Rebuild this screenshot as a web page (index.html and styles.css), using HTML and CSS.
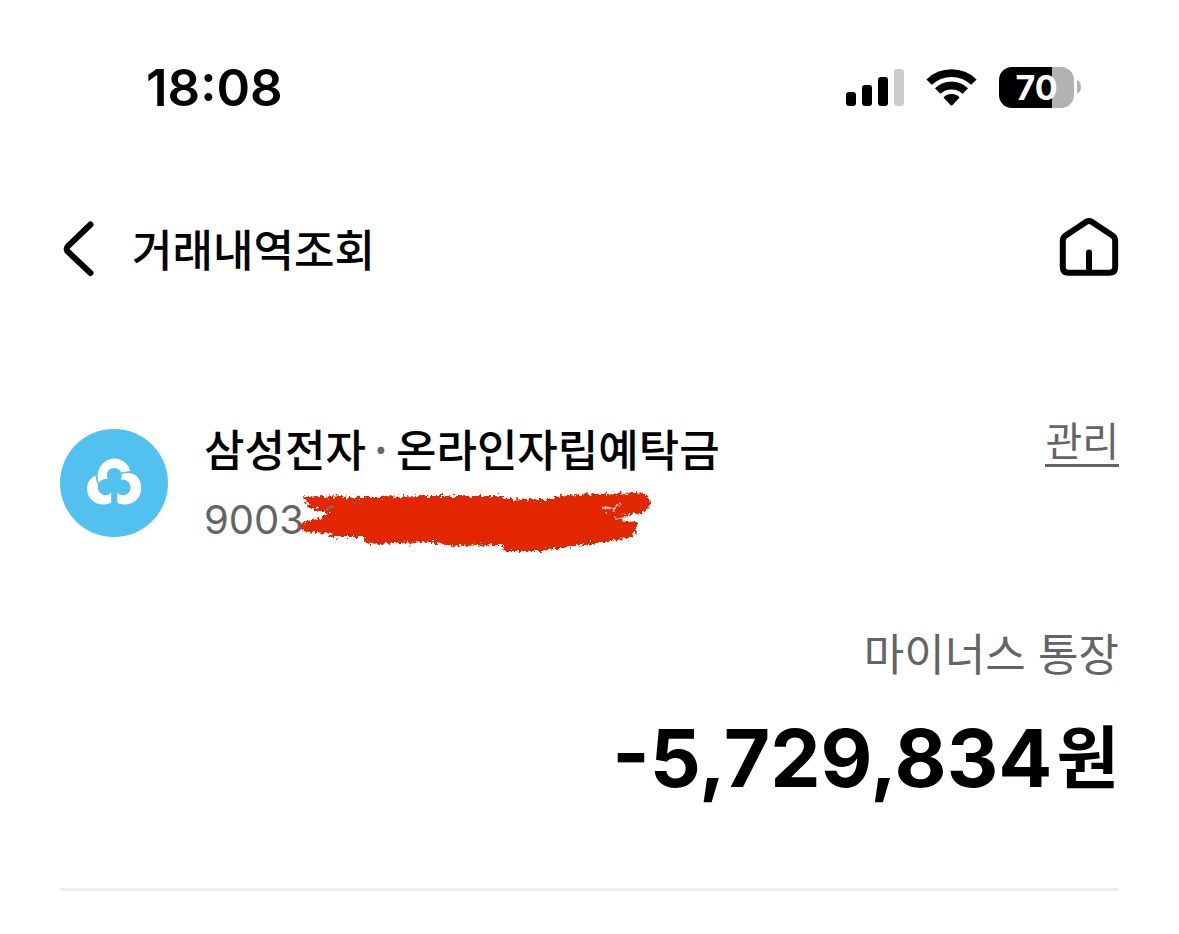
FILE: index.html
```html
<!DOCTYPE html>
<html lang="ko">
<head>
<meta charset="utf-8">
<meta name="viewport" content="width=device-width, initial-scale=1">
<title>거래내역조회</title>
<link rel="stylesheet" href="styles.css">
</head>
<body>
<div class="status-bar">
  <time class="clock">18:08</time>
  <div class="indicators">
    <svg class="signal" width="58" height="37" viewBox="0 0 58 37" aria-hidden="true">
      <rect x="0" y="23" width="10" height="14" rx="3"/>
      <rect x="16" y="16" width="10" height="21" rx="3"/>
      <rect x="32" y="8" width="10" height="29" rx="3"/>
      <rect x="48" y="0" width="10" height="37" rx="3" fill="#cccccc"/>
    </svg>
    <svg class="wifi" width="51" height="37" viewBox="0 0 51 37" aria-hidden="true">
      <path d="M0.4 10.4A36 36 0 0 1 50.6 10.4L45.2 15.8A28.6 28.6 0 0 0 5.8 15.8Z"/>
      <path d="M9 19.2A23.5 23.5 0 0 1 42 19.2L36.7 24.8A16.6 16.6 0 0 0 14.3 24.8Z"/>
      <path d="M17.5 28.4A11.3 11.3 0 0 1 33.5 28.4L26.6 35.9Q25.5 37 24.4 35.9Z"/>
    </svg>
    <div class="battery"><span class="battery-level">70</span><svg class="battery-cap" width="4" height="14" viewBox="0 0 4 14" aria-hidden="true"><path d="M0 0Q4 2 4 7T0 14Z" fill="#b2b2b2"/></svg></div>
  </div>
</div>
<header class="header">
  <button class="icon-button" type="button" aria-label="뒤로">
    <svg width="36" height="60" viewBox="0 0 36 60"><path d="M30.5 6.5L8 28.2Q5.2 31 8 33.8L30.5 55" class="line"/></svg>
  </button>
  <h1 class="title">거래내역조회</h1>
  <button class="icon-button home" type="button" aria-label="홈">
    <svg width="60" height="60" viewBox="0 0 60 60"><path d="M27 3.9Q30 2.1 33 3.9L53 17.2Q56.2 19.2 56.2 22.7V49Q56.2 54.8 50.4 54.8H9.6Q3.8 54.8 3.8 49V22.7Q3.8 19.2 7 17.2ZM30 54V34.5" class="line"/></svg>
  </button>
</header>
<main class="content">
  <section class="account">
    <svg class="logo" width="108" height="108" viewBox="0 0 108 108" aria-hidden="true">
      <circle cx="54" cy="54" r="54" fill="#53c1f0"/>
      <g fill="#fff">
        <path d="M37.5 46.6C38.5 36 46 29.4 54 29.4C62 29.4 68.5 34.5 70.3 42.1L61 43.5C59.8 40.6 57.2 39 54 39C49.8 39 46.8 42.3 47 46.2C47 48 47.5 49 47.5 50.2C44.5 49.3 41 50.5 38.8 53.8Q37.4 50.5 37.5 46.6Z"/>
        <path d="M35.5 46.6C30.5 48.8 27 53.5 27 59.6C27 68.5 34 75.5 42.5 75.5C46 75.5 49.2 74.8 51.2 73.4V63.7C48.5 66.8 43.8 67 40.5 64.3C37.8 62.1 37.2 58.4 38.3 55.8Q35.8 52 35.5 46.6Z"/>
        <path d="M61.7 45C68 43.2 73 44.1 76.5 47.1C80 50.3 81.1 54.5 81.1 59.6C81.1 68.5 74 75.5 65.6 75.5C62.2 75.5 59.2 74.8 57.3 73.4V63.7C60 66.8 64.8 67 68 64.3C71.1 61.6 71.5 56.8 68.7 53.5C66.5 50.8 63.4 50 60.8 50.8Q61.9 48 61.7 45Z"/>
      </g>
    </svg>
    <div class="account-text">
      <h2 class="account-name">삼성전자<span class="dot">·</span>온라인자립예탁금</h2>
      <p class="account-number">9003
        <svg class="scribble" width="360" height="70" viewBox="0 0 360 70" aria-hidden="true">
          <defs>
            <filter id="rough" x="-5%" y="-10%" width="110%" height="120%">
              <feTurbulence type="fractalNoise" baseFrequency="0.3" numOctaves="2" seed="4" result="n"/>
              <feDisplacementMap in="SourceGraphic" in2="n" scale="10" xChannelSelector="R" yChannelSelector="G"/>
              <feGaussianBlur stdDeviation="0.6"/>
            </filter>
          </defs>
          <path filter="url(#rough)" fill="#e22704" d="M6 7L70 8L130 7L206 7L208 10L250 11L265 7L300 5L340 4Q354 5 354 15Q353 23 343 24L325 28L327 31L340 33Q342 43 337 47L312 53L280 57L245 62L208 62L206 56L160 57L130 53L70 55L68 48L38 48L30 44L5 42V34L28 28L33 24L14 19Z"/>
          <path d="M30 22Q33 16 38 18" fill="none" stroke="#77706e" stroke-width="2"/>
          <path d="M56 15Q61 11 66 15" fill="none" stroke="#a04838" stroke-width="2"/>
          <path d="M304 19L318 17L326 15L319 21L310 22ZM320 28L332 27L327 31H319Z" fill="#e8b1a5" filter="url(#rough)"/>
        </svg>
      </p>
    </div>
    <a class="manage" href="#manage">관리</a>
  </section>
  <section class="balance">
    <p class="balance-label">마이너스 통장</p>
    <p class="amount"><span>-5,729,834</span><span class="unit">원</span></p>
  </section>
</main>
</body>
</html>
```
FILE: styles.css
```css
* { box-sizing: border-box; }
body {
  margin: 0;
  padding: 0 60px;
  background: #fff;
  color: #000;
  font-family: Inter, "Noto Sans CJK KR", sans-serif;
}
h1, h2, p { margin: 0; }
.status-bar {
  display: flex;
  justify-content: space-between;
  align-items: center;
  padding: 56px 38px 0 86px;
  height: 118px;
}
.clock { font-size: 51px; line-height: 60px; padding-top: 2px; font-weight: 600; }
.indicators { display: flex; align-items: center; gap: 22px; }
.battery { display: flex; align-items: center; gap: 3px; }
.battery-level {
  width: 75px;
  height: 41px;
  border-radius: 13px;
  background: linear-gradient(to right, #000 53px, #b2b2b2 53px);
  color: #fff;
  font-size: 34px;
  line-height: 41px;
  font-weight: 700;
  text-align: center;
}
.header { display: flex; align-items: center; padding-top: 98px; }
.icon-button { display: flex; padding: 0; border: 0; background: none; cursor: pointer; }
.line { fill: none; stroke: #000; stroke-width: 6; stroke-linecap: round; stroke-linejoin: round; }
.title {
  margin-left: 36px;
  font: 500 44px/64px "Noto Sans CJK KR", sans-serif;
}
.home { margin-left: auto; }
.account { display: flex; align-items: flex-start; padding-top: 136px; }
.logo { flex: none; margin-top: 13px; }
.account-text { flex: 1; padding-left: 36px; }
.account-name { font: 500 44px/64px "Noto Sans CJK KR", sans-serif; }
.dot { display: inline-block; width: 30px; text-align: center; color: #666; }
.account-number {
  position: relative;
  font-size: 40px;
  line-height: 56px;
  margin-top: 12px;
  color: #626466;
}
.scribble { position: absolute; left: 92px; top: -3px; }
.manage {
  border-bottom: 3px solid #646464;
  color: #646464;
  font: 400 40px/46px "Noto Sans CJK KR", sans-serif;
  padding-bottom: 2px;
  text-decoration: none;
}
.balance {
  padding: 72px 0 76px;
  border-bottom: 3px solid #eeeeee;
  text-align: right;
}
.balance-label { color: #626466; font: 400 44px/64px "Noto Sans CJK KR", sans-serif; }
.amount {
  display: flex;
  justify-content: flex-end;
  align-items: center;
  gap: 4px;
  margin-top: 20px;
  font-size: 80px;
  line-height: 108px;
  font-weight: 700;
}
.unit { padding-bottom: 8px; font: 700 68px/100px "Noto Sans CJK KR", sans-serif; }
```
